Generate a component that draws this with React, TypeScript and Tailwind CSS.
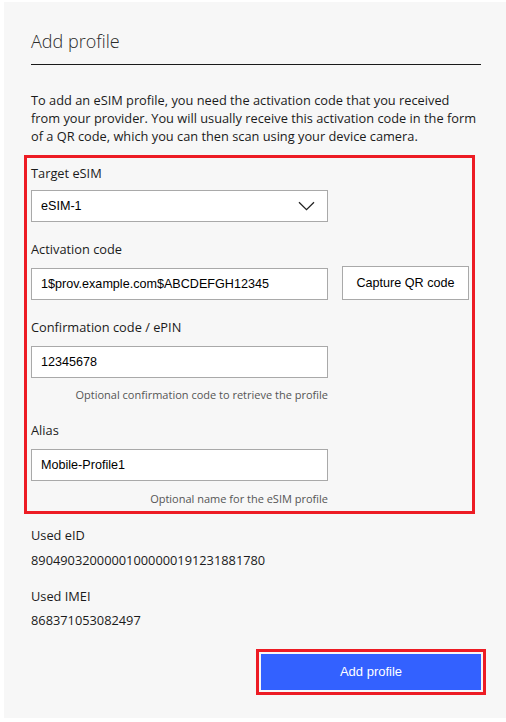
import React from "react";

const sans = { fontFamily: "'Open Sans', 'Liberation Sans', sans-serif" };

function Field({ value, w = "w-[297px]" }: { value: string; w?: string }) {
  return (
    <div
      className={`${w} h-[32px] bg-white border border-[#a9a9a9] flex items-center pl-[9px] text-[12.6px] text-black font-['Liberation_Sans',Arial,sans-serif]`}
    >
      {value}
    </div>
  );
}

export default function App() {
  return (
    <div className="w-[506px] h-[722px] bg-white pt-[2px] pl-[4px]">
      <div
        className="w-[502px] h-[716px] bg-[#f7f7f7] pt-[27px] pl-[27px] pr-[25px] flex flex-col text-[#1b1b1b]"
        style={sans}
      >
        <h1 className="text-[18px] leading-[24px] font-light text-[#2b2b2b]">Add profile</h1>
        <div className="mt-[11px] h-px bg-[#1a1a1a] w-[450px]" />
        <p className="mt-[26px] text-[12.8px] leading-[18px] text-[#1b1b1b]">
          To add an eSIM profile, you need the activation code that you received from your provider. You will usually
          receive this activation code in the form of a QR code, which you can then scan using your device camera.
        </p>

        <div className="mt-[10px] -ml-[7px] w-[451px] border-[3px] border-[#ed1c24] pl-[4px] pt-[6px] pb-[5px] flex flex-col">
          <label className="text-[12.8px] leading-[18px]">Target eSIM</label>
          <div className="mt-[8px] w-[297px] h-[32px] bg-white border border-[#a9a9a9] flex items-center justify-between pl-[9px] pr-[12px] text-[12.6px] text-black font-['Liberation_Sans',Arial,sans-serif]">
            <span>eSIM-1</span>
            <svg width="17" height="10" viewBox="0 0 17 10" fill="none">
              <path d="M1 1.2 L8.5 8.6 L16 1.2" stroke="#222" strokeWidth="1.3" />
            </svg>
          </div>

          <label className="mt-[18px] text-[12.8px] leading-[18px]">Activation code</label>
          <div className="mt-[8px] flex items-end gap-[14px]">
            <Field value="1$prov.example.com$ABCDEFGH12345" />
            <button className="w-[127px] h-[34px] bg-white border border-[#a9a9a9] text-[12.6px] text-black font-['Liberation_Sans',Arial,sans-serif]">
              Capture QR code
            </button>
          </div>

          <label className="mt-[18px] text-[12.8px] leading-[18px]">Confirmation code / ePIN</label>
          <div className="mt-[10px]">
            <Field value="12345678" />
          </div>
          <div className="mt-[10px] w-[297px] text-right text-[11px] leading-[14px] text-[#555]">
            Optional confirmation code to retrieve the profile
          </div>

          <label className="mt-[19px] text-[12.8px] leading-[18px]">Alias</label>
          <div className="mt-[10px]">
            <Field value="Mobile-Profile1" />
          </div>
          <div className="mt-[11px] w-[297px] text-right text-[11px] leading-[14px] text-[#555]">
            Optional name for the eSIM profile
          </div>
        </div>

        <div className="mt-[12px] text-[12.8px] leading-[18px]">Used eID</div>
        <div className="mt-[7px] text-[12.8px] leading-[18px]">89049032000001000000191231881780</div>
        <div className="mt-[18px] text-[12.8px] leading-[18px]">Used IMEI</div>
        <div className="mt-[6px] text-[12.8px] leading-[18px]">868371053082497</div>

        <div className="mt-[20px] flex justify-end -mr-[5px]">
          <div className="border-[3px] border-[#ed1c24] p-[2px]">
            <button className="w-[220px] h-[36px] bg-[#3361ff] text-white text-[13px] font-['Liberation_Sans',Arial,sans-serif]">
              Add profile
            </button>
          </div>
        </div>
      </div>
    </div>
  );
}
